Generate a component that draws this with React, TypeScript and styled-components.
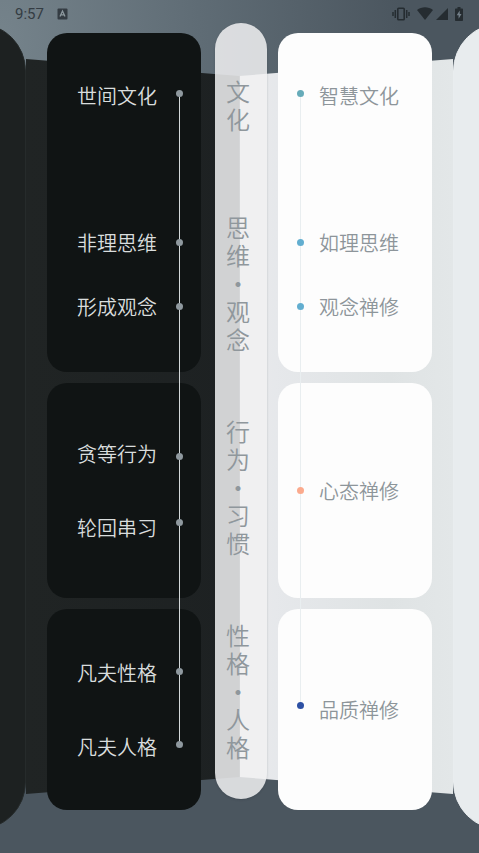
import React from 'react';
import styled, { createGlobalStyle } from 'styled-components';

const GlobalStyle = createGlobalStyle`
  *, *::before, *::after { box-sizing: border-box; }
  body { margin: 0; background: #4b565f; }
  ul, h1, h2 { margin: 0; padding: 0; list-style: none; font-weight: inherit; font-size: inherit; }
`;

type Tone = 'dark' | 'light';

const Screen = styled.div`
  display: flex;
  flex-direction: column;
  min-height: 100vh;
  padding-bottom: 23px;
  overflow: hidden;
  background: radial-gradient(ellipse 400px 620px at 0 40px, #75838b 0%, #5f6c75 50%, #4b565f 100%);
  font-family: 'Noto Sans CJK SC', 'Noto Sans', sans-serif;
  font-weight: 350;
`;

const StatusBar = styled.header`
  display: flex;
  align-items: center;
  justify-content: space-between;
  height: 23px;
  padding: 4px 16px 0 15px;
  color: #252c31;
`;

const StatusGroup = styled.div<{ $gap: number }>`
  display: flex;
  align-items: center;
  gap: ${(p) => p.$gap}px;
`;

const Clock = styled.time`
  font: 400 15px/18px Roboto, sans-serif;
  color: #343c43;
`;

const Body = styled.main`
  display: grid;
  flex: 1;
`;

const Backdrop = styled.div`
  grid-area: 1 / 1;
  display: grid;
  grid-template-columns: 26px minmax(0, 1fr) minmax(0, 1fr) 26px;
`;

const Edge = styled.div<{ $tone: Tone }>`
  z-index: 1;
  width: 100px;
  justify-self: ${(p) => (p.$tone === 'dark' ? 'end' : 'start')};
  border-radius: 48px;
  background: ${(p) => (p.$tone === 'dark' ? '#1d2121' : '#e8ecee')};
  border: 1px solid ${(p) => (p.$tone === 'dark' ? '#262b2b' : '#e9edef')};
`;

const Leaf = styled.div<{ $tone: Tone }>`
  margin: 36px 0;
  background: ${(p) =>
    p.$tone === 'dark'
      ? 'linear-gradient(90deg, #202424, #1d2122)'
      : 'linear-gradient(90deg, #ebebec, #e6e8eb 16%, #dfe3e4 70%, #e3e7e8)'};
  clip-path: ${(p) =>
    p.$tone === 'dark'
      ? 'polygon(0 0, 100% 17px, 100% calc(100% - 17px), 0 100%)'
      : 'polygon(0 17px, 100% 0, 100% 100%, 0 calc(100% - 17px))'};
`;

const Content = styled.div`
  grid-area: 1 / 1;
  z-index: 2;
  display: flex;
  align-items: flex-start;
  padding: 0 47px;
`;

const Column = styled.section`
  position: relative;
  display: flex;
  flex: 1;
  flex-direction: column;
  gap: 11px;
  margin-top: 10px;
`;

const Card = styled.ul<{ $tone: Tone; $height: number }>`
  display: flex;
  flex-direction: column;
  justify-content: center;
  gap: 46px;
  min-height: ${(p) => p.$height}px;
  padding-left: ${(p) => (p.$tone === 'dark' ? 30 : 41)}px;
  border-radius: 20px;
  background: ${(p) => (p.$tone === 'dark' ? '#101414' : '#fdfdfd')};
  color: ${(p) => (p.$tone === 'dark' ? '#d9dddd' : '#8d959a')};
`;

const Label = styled.li`
  font-size: 20px;
  line-height: 28px;
  white-space: nowrap;
`;

const TopCard = styled(Card)`
  gap: 36px;
  padding-bottom: 2px;

  ${Label}:first-child {
    margin-bottom: 83px;
  }
`;

const Rail = styled.div<{ $tone: Tone }>`
  position: absolute;
  top: 57px;
  ${(p) => (p.$tone === 'dark' ? 'right: 18px;' : 'left: 19px;')}
  width: 7px;

  &::before {
    content: '';
    position: absolute;
    inset: 3px;
    background: ${(p) => (p.$tone === 'dark' ? '#d3d8d9' : '#e9eef0')};
  }
`;

const Dot = styled.div<{ $color: string; $gap: number }>`
  position: relative;
  height: 7px;
  margin-top: ${(p) => p.$gap}px;
  border-radius: 50%;
  background: ${(p) => p.$color};
`;

const Spine = styled.section`
  display: flex;
  flex: none;
  flex-direction: column;
  align-items: center;
  gap: 64px;
  width: 52px;
  margin: 0 11px 0 14px;
  padding: 54px 6px 38px 0;
  border-radius: 26px;
  background: rgba(241, 241, 242, 0.85);
  box-shadow: 0 1px 2px rgba(40, 48, 54, 0.25);
  color: #8f979c;
`;

const SpineHeading = styled.h2`
  width: 24px;
  font-size: 24px;
  line-height: 28px;
  text-align: center;
  line-break: anywhere;

  &:first-child {
    margin-bottom: 16px;
  }
`;

interface Mark {
  color: string;
  gap: number;
}

interface Side {
  tone: Tone;
  groups: string[][];
  marks: Mark[];
}

const GREY = '#8f999f';
const BLUE = '#62aed0';

const left: Side = {
  tone: 'dark',
  groups: [
    ['世间文化', '非理思维', '形成观念'],
    ['贪等行为', '轮回串习'],
    ['凡夫性格', '凡夫人格'],
  ],
  marks: [0, 142, 57, 143, 59, 142, 66].map((gap) => ({ color: GREY, gap })),
};

const right: Side = {
  tone: 'light',
  groups: [['智慧文化', '如理思维', '观念禅修'], ['心态禅修'], ['品质禅修']],
  marks: [
    { color: '#66abb9', gap: 0 },
    { color: BLUE, gap: 142 },
    { color: BLUE, gap: 57 },
    { color: '#fbaa8d', gap: 177 },
    { color: '#2d50a4', gap: 208 },
  ],
};

const cardHeights = [339, 215, 201];
const spineHeadings = ['文化', '思维・观念', '行为・习惯', '性格・人格'];

function SideColumn({ tone, groups, marks }: Side) {
  return (
    <Column>
      {groups.map((labels, i) => {
        const Box = i === 0 ? TopCard : Card;
        return (
          <Box key={labels[0]} $tone={tone} $height={cardHeights[i]}>
            {labels.map((label) => (
              <Label key={label}>{label}</Label>
            ))}
          </Box>
        );
      })}
      <Rail $tone={tone} aria-hidden="true">
        {marks.map((mark, i) => (
          <Dot key={i} $color={mark.color} $gap={mark.gap} />
        ))}
      </Rail>
    </Column>
  );
}

function KeyboardIcon() {
  return (
    <svg width="11" height="12" viewBox="0 0 11 12" aria-hidden="true">
      <rect x="0.5" y="0.5" width="10" height="11" rx="1" fill="#343c43" />
      <path d="M3 8.6 5.5 3 8 8.6M4 6.9h3" fill="none" stroke="#8d999f" strokeWidth="1.3" />
    </svg>
  );
}

function VibrateIcon() {
  return (
    <svg width="18" height="14" viewBox="0 0 18 14" fill="none" stroke="currentColor" aria-hidden="true">
      <rect x="5.8" y="1.3" width="6.4" height="11.4" rx="0.8" strokeWidth="1.6" />
      <path d="M3.3 3v8M14.7 3v8M1 5v4M17 5v4" strokeWidth="1.5" />
    </svg>
  );
}

function WifiIcon() {
  return (
    <svg width="16" height="13" viewBox="0 0 16 13" fill="currentColor" aria-hidden="true">
      <path d="M8 13 0 3C4.5-.7 11.5-.7 16 3Z" />
    </svg>
  );
}

function SignalIcon() {
  return (
    <svg width="12" height="12" viewBox="0 0 12 12" fill="currentColor" aria-hidden="true">
      <path d="M12 0v12H0Z" />
    </svg>
  );
}

function BatteryIcon() {
  return (
    <svg width="8" height="14" viewBox="0 0 8 14" aria-hidden="true">
      <path
        d="M2.5 0h3v1.5H7.2q.8 0 .8.8v10.9q0 .8-.8.8H.8q-.8 0-.8-.8V2.3q0-.8.8-.8h1.7Z"
        fill="currentColor"
      />
      <path d="M4.7 3.500 1.7 8.2h1.900v3.600l2.900-4.900H4.700Z" fill="#74808a" />
    </svg>
  );
}

export default function App() {
  return (
    <>
      <GlobalStyle />
      <Screen>
        <StatusBar>
          <StatusGroup $gap={13}>
            <Clock>9:57</Clock>
            <KeyboardIcon />
          </StatusGroup>
          <StatusGroup $gap={7}>
            <VibrateIcon />
            <StatusGroup $gap={3}>
              <WifiIcon />
              <SignalIcon />
            </StatusGroup>
            <BatteryIcon />
          </StatusGroup>
        </StatusBar>
        <Body>
          <Backdrop aria-hidden="true">
            <Edge $tone="dark" />
            <Leaf $tone="dark" />
            <Leaf $tone="light" />
            <Edge $tone="light" />
          </Backdrop>
          <Content>
            <SideColumn {...left} />
            <Spine>
              {spineHeadings.map((heading) => (
                <SpineHeading key={heading}>{heading}</SpineHeading>
              ))}
            </Spine>
            <SideColumn {...right} />
          </Content>
        </Body>
      </Screen>
    </>
  );
}
